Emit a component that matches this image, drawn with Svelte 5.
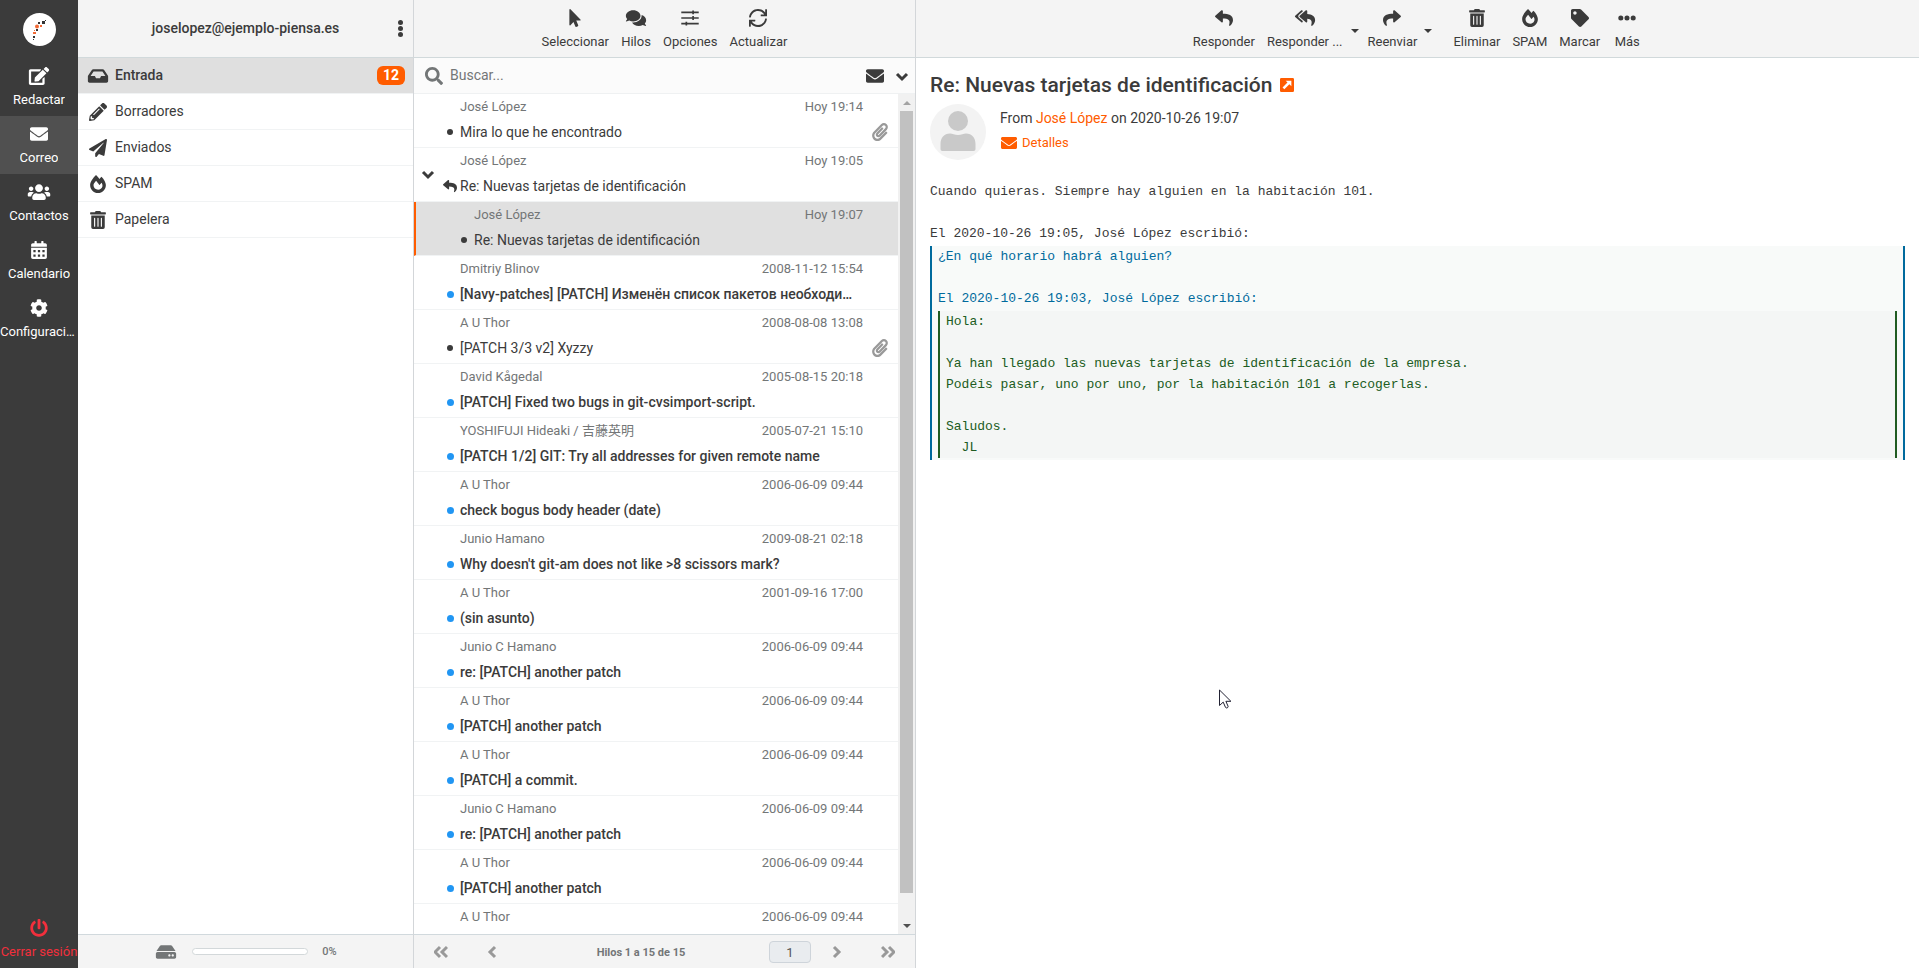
<script>
  // glyphs are drawn on a 512 high grid, w is the grid width
  const icons = {
    compose: { w: 576, d: 'M402.6 83.2l90.2 90.2c3.8 3.8 3.8 10 0 13.8L274.4 405.6l-92.8 10.3c-12.4 1.4-22.9-9.1-21.5-21.5l10.3-92.8L388.8 83.2c3.8-3.8 10-3.8 13.8 0zm162-22.9l-48.8-48.8c-15.2-15.2-39.9-15.2-55.2 0l-35.4 35.4c-3.8 3.8-3.8 10 0 13.8l90.2 90.2c3.8 3.8 10 3.8 13.8 0l35.4-35.4c15.2-15.3 15.2-40 0-55.2zM384 346.2V448H64V128h229.8c3.2 0 6.2-1.3 8.5-3.5l40-40c7.6-7.6 2.2-20.5-8.5-20.5H48C21.5 64 0 85.5 0 112v352c0 26.5 21.5 48 48 48h352c26.5 0 48-21.5 48-48V306.2c0-10.7-12.9-16-20.5-8.5l-40 40c-2.2 2.3-3.5 5.3-3.5 8.5z' },
    mail: { w: 512, d: 'M502.3 190.8c3.9-3.1 9.7-.2 9.7 4.7V400c0 26.5-21.5 48-48 48H48c-26.5 0-48-21.5-48-48V195.6c0-5 5.7-7.8 9.7-4.7 22.4 17.4 52.1 39.5 154.1 113.6 21.1 15.4 56.7 47.8 92.2 47.6 35.7.3 72-32.8 92.3-47.6 102-74.1 131.6-96.3 154-113.7zM256 320c23.2.4 56.6-29.2 73.4-41.4 132.7-96.3 142.8-104.7 173.4-128.7 5.8-4.5 9.2-11.5 9.2-18.9v-19c0-26.5-21.5-48-48-48H48c-26.5 0-48 21.5-48 48v19c0 7.4 3.4 14.3 9.2 18.9 30.6 23.9 40.7 32.4 173.4 128.7 16.8 12.2 50.2 41.8 73.4 41.4z' },
    users: { w: 640, d: 'M96 224c35.3 0 64-28.7 64-64s-28.7-64-64-64-64 28.7-64 64 28.7 64 64 64zm448 0c35.3 0 64-28.7 64-64s-28.7-64-64-64-64 28.7-64 64 28.7 64 64 64zm32 32h-64c-17.6 0-33.5 7.1-45.1 18.6 40.3 22.1 68.9 62 75.1 109.4h66c17.7 0 32-14.3 32-32v-32c0-35.3-28.7-64-64-64zm-256 0c61.9 0 112-50.1 112-112S381.9 32 320 32 208 82.1 208 144s50.1 112 112 112zm76.8 32h-8.3c-20.8 10-43.9 16-68.5 16s-47.6-6-68.5-16h-8.3C179.6 288 128 339.6 128 403.2V432c0 26.5 21.5 48 48 48h288c26.5 0 48-21.5 48-48v-28.8c0-63.6-51.6-115.2-115.2-115.2zm-223.7-13.4C161.5 263.1 145.6 256 128 256H64c-35.3 0-64 28.7-64 64v32c0 17.7 14.3 32 32 32h65.9c6.3-47.4 34.9-87.3 75.2-109.4z' },
    calendar: { w: 448, d: 'M400 64h-48V16c0-8.8-7.2-16-16-16h-32c-8.8 0-16 7.2-16 16v48H160V16c0-8.8-7.2-16-16-16h-32c-8.8 0-16 7.2-16 16v48H48C21.5 64 0 85.5 0 112v48h448v-48c0-26.5-21.5-48-48-48zM0 192v272c0 26.500 21.500 48 48 48h352c26.500 0 48-21.500 48-48V192zM64 256h64v64H64zm128 0h64v64h-64zm128 0h64v64h-64zM64 384h64v64H64zm128 0h64v64h-64zm128 0h64v64h-64z' },
    cog: { w: 512, d: 'M487.4 315.7l-42.6-24.6c4.3-23.2 4.3-47 0-70.2l42.6-24.6c4.9-2.8 7.1-8.6 5.5-14-11.1-35.6-30-67.8-54.7-94.6-3.8-4.1-10-5.1-14.8-2.3L380.8 110c-17.9-15.4-38.5-27.3-60.8-35.1V25.8c0-5.6-3.9-10.5-9.4-11.7-36.7-8.2-74.3-7.8-109.2 0-5.5 1.2-9.4 6.1-9.4 11.7V75c-22.2 7.9-42.8 19.8-60.8 35.1L88.7 85.5c-4.9-2.8-11-1.9-14.8 2.3-24.7 26.7-43.6 58.9-54.7 94.6-1.7 5.4.6 11.2 5.5 14L67.3 221c-4.3 23.2-4.3 47 0 70.2l-42.6 24.6c-4.9 2.8-7.1 8.6-5.5 14 11.1 35.6 30 67.8 54.7 94.6 3.8 4.1 10 5.1 14.8 2.3l42.6-24.6c17.9 15.4 38.5 27.3 60.8 35.1v49.2c0 5.6 3.9 10.5 9.4 11.7 36.7 8.2 74.3 7.8 109.2 0 5.5-1.2 9.4-6.1 9.4-11.700v-49.2c22.2-7.9 42.8-19.8 60.8-35.1l42.6 24.6c4.9 2.8 11 1.9 14.8-2.3 24.7-26.7 43.6-58.9 54.7-94.6 1.5-5.5-.7-11.3-5.6-14.1zM256 336c-44.1 0-80-35.9-80-80s35.9-80 80-80 80 35.9 80 80-35.9 80-80 80z' },
    power: { w: 512, d: 'M400 54.1c63 45 104 118.6 104 201.9 0 136.8-110.8 247.7-247.5 248C120 504.3 8.2 393 8 256.4 7.900 173.1 48.9 99.3 111.8 54.2c11.7-8.3 28-4.8 35 7.7L162.6 90c5.9 10.5 3.1 23.8-6.6 31-41.5 30.8-68 79.6-68 134.9-.1 92.3 74.5 168.1 168 168.1 91.6 0 168.6-74.2 168-169.1-.3-51.8-24.7-101.8-68.1-134-9.7-7.2-12.4-20.5-6.5-30.9l15.8-28.1c7-12.4 23.2-16.1 34.8-7.8zM296 264V24c0-13.3-10.7-24-24-24h-32c-13.3 0-24 10.7-24 24v240c0 13.3 10.7 24 24 24h32c13.3 0 24-10.7 24-24z' },
    inbox: { w: 576, d: 'M567.9 243.900L462.3 85.400A48 48 0 0 0 422.300 64H153.700a48 48 0 0 0-40 21.400L8.100 243.900A48 48 0 0 0 0 270.500V400c0 26.500 21.500 48 48 48h480c26.500 0 48-21.500 48-48V270.500a48 48 0 0 0-8.100-26.600zM162.300 128h251.500l85.300 128H376l-32 64H232l-32-64H76.900l85.400-128z' },
    pencil: { w: 512, d: 'M497.9 142.1l-46.1 46.1c-4.7 4.7-12.3 4.7-17 0l-111-111c-4.7-4.7-4.7-12.3 0-17l46.1-46.1c18.7-18.7 49.1-18.7 67.9 0l60.1 60.1c18.8 18.7 18.8 49.1 0 67.9zM284.2 99.8L21.6 362.4.4 483.900c-2.9 16.4 11.400 30.6 27.8 27.8l121.500-21.3 262.600-262.600c4.700-4.700 4.700-12.300 0-17l-111-111c-4.800-4.700-12.400-4.700-17.100 0zM124.100 339.900c-5.500-5.500-5.500-14.300 0-19.800l154-154c5.500-5.500 14.300-5.500 19.800 0s5.500 14.300 0 19.800l-154 154c-5.500 5.500-14.300 5.500-19.800 0zM88 424h48v36.300l-64.500 11.300-31.100-31.100L51.700 376H88v48z' },
    plane: { w: 512, d: 'M476 3.2L12.5 270.6c-18.1 10.4-15.8 35.6 2.2 43.2L121 358.4l287.3-253.2c5.5-4.9 13.3 2.6 8.6 8.3L176 407v80.5c0 23.6 28.5 32.9 42.5 15.8L282 426l124.6 52.2c14.2 6 30.4-2.9 33-18.2l72-432C515 7.8 493.3-6.8 476 3.2z' },
    fire: { w: 448, d: 'M323.56 51.2c-20.8 19.3-39.58 39.59-56.22 59.97C240.08 73.62 206.28 35.53 168 0 69.74 91.17 0 209.96 0 281.6 0 408.85 100.29 512 224 512s224-103.15 224-230.4c0-53.27-51.98-163.14-124.44-230.4zm-19.47 340.65C282.43 407.01 255.72 416 226.86 416 154.71 416 96 368.26 96 290.75c0-38.61 24.31-72.63 72.79-130.75 6.93 7.98 98.83 125.34 98.83 125.34l58.63-66.88c4.14 6.85 7.91 13.55 11.27 19.97 27.35 52.19 15.81 118.97-33.43 153.42z' },
    trash: { w: 448, d: 'M32 464a48 48 0 0 0 48 48h288a48 48 0 0 0 48-48V128H32zm272-256a16 16 0 0 1 32 0v224a16 16 0 0 1-32 0zm-96 0a16 16 0 0 1 32 0v224a16 16 0 0 1-32 0zm-96 0a16 16 0 0 1 32 0v224a16 16 0 0 1-32 0zM432 32H312l-9.4-18.7A24 24 0 0 0 281.1 0H166.8a23.72 23.72 0 0 0-21.4 13.3L136 32H16A16 16 0 0 0 0 48v32a16 16 0 0 0 16 16h416a16 16 0 0 0 16-16V48a16 16 0 0 0-16-16z' },
    pointer: { w: 320, d: 'M302.189 329.126H196.105l55.831 135.993c3.889 9.428-.555 19.999-9.444 23.999l-49.165 21.427c-9.165 4-19.443-.571-23.332-9.714l-53.053-129.136-86.664 89.138C18.729 472.71 0 463.554 0 447.977V18.299C0 1.899 19.921-6.096 30.277 5.443l284.412 292.542c11.472 11.179 3.007 31.141-12.5 31.141z' },
    comments: { w: 576, d: 'M416 192c0-88.4-93.1-160-208-160S0 103.6 0 192c0 34.3 14.1 65.9 38 92-13.4 30.2-35.5 54.2-35.8 54.5-2.2 2.3-2.8 5.7-1.5 8.7S4.8 352 8 352c36.6 0 66.9-12.3 88.7-25 32.2 15.7 70.3 25 111.3 25 114.9 0 208-71.6 208-160zm122 220c23.9-26 38-57.7 38-92 0-66.9-53.5-124.2-129.3-148.1.9 6.6 1.3 13.3 1.3 20.1 0 105.9-107.7 192-240 192-10.8 0-21.3-.8-31.7-1.9C207.8 439.6 281.8 480 368 480c41 0 79.1-9.2 111.3-25 21.8 12.7 52.1 25 88.7 25 3.2 0 6.1-1.9 7.3-4.8 1.3-2.9.7-6.3-1.5-8.7-.3-.3-22.4-24.2-35.8-54.5z' },
    sliders: { w: 512, d: 'M8 72h312V40h48v32h136v48H368v32h-48v-32H8zM8 232h312v-32h48v32h136v48H368v32h-48v-32H8zM8 392h120v-32h48v32h328v48H176v32h-48v-32H8z' },
    refresh: { w: 512, d: 'M500 8h-27.700c-6.600 0-12 5.400-12 12v78C416 39 341 0 256 0 125 0 18 98 2 226c-1 7 5 14 12 14h29c6 0 11-4 12-10C70 130 154 56 256 56c74 0 140 39 176 100h-87c-7 0-12 5-12 12v28c0 7 5 12 12 12h155c7 0 12-5 12-12V20c0-7-5-12-12-12zM12 504h27.700c6.600 0 12-5.400 12-12v-78C96 473 171 512 256 512c131 0 238-98 254-226 1-7-5-14-12-14h-29c-6 0-11 4-12 10-15 100-99 174-201 174-74 0-140-39-176-100h87c7 0 12-5 12-12v-28c0-7-5-12-12-12H12c-7 0-12 5-12 12v176c0 7 5 12 12 12z' },
    search: { w: 512, d: 'M505 442.7L405.3 343c-4.5-4.5-10.6-7-17-7H372c27.6-35.3 44-79.7 44-128C416 93.1 322.9 0 208 0S0 93.1 0 208s93.1 208 208 208c48.3 0 92.7-16.4 128-44v16.3c0 6.4 2.5 12.5 7 17l99.7 99.7c9.4 9.4 24.6 9.4 33.9 0l28.3-28.3c9.4-9.4 9.4-24.6.1-34zM208 336c-70.7 0-128-57.2-128-128 0-70.7 57.2-128 128-128 70.7 0 128 57.2 128 128 0 70.7-57.2 128-128 128z' },
    clip: { w: 448, d: 'M43.246 466.142c-58.43-60.289-57.341-157.511 1.386-217.581L254.392 34c44.316-45.332 116.351-45.336 160.671 0 43.89 44.894 43.943 117.329 0 162.276L232.214 383.128c-29.855 30.537-78.633 30.111-107.982-.998-28.275-29.97-27.368-77.473 1.452-106.953l143.743-146.835c6.182-6.314 16.312-6.422 22.626-.241l22.861 22.379c6.315 6.182 6.422 16.312.241 22.626L171.427 319.927c-4.932 5.045-5.236 13.428-.648 18.292 4.372 4.634 11.245 4.711 15.688.165l182.849-186.851c19.613-20.062 19.613-52.725-.011-72.798-19.189-19.627-49.957-19.637-69.154 0L90.39 293.295c-34.763 35.56-35.299 93.12-1.191 128.313 34.01 35.093 88.985 35.137 123.058.286l172.06-175.999c6.177-6.319 16.307-6.433 22.626-.256l22.877 22.364c6.319 6.177 6.434 16.307.256 22.626l-172.06 175.998c-59.576 60.938-155.943 60.216-214.77-.485z' },
    reply: { w: 512, d: 'M8.309 189.836L184.313 37.851C199.719 24.546 224 35.347 224 56.015v80.053c160.629 1.839 288 34.032 288 186.258 0 61.441-39.581 122.309-83.333 154.132-13.653 9.931-33.111-2.533-28.077-18.631 45.344-145.012-21.507-183.51-176.59-185.742V360c0 20.7-24.3 31.453-39.687 18.164l-176.004-152c-11.071-9.562-11.086-26.753 0-36.328z' },
    replyAll: { w: 576, d: 'M136.309 189.836L312.313 37.851C327.72 24.546 352 35.348 352 56.015v82.763c129.182 10.231 224 52.212 224 183.548 0 61.441-39.582 122.309-83.333 154.132-13.653 9.931-33.111-2.533-28.077-18.631 38.512-123.162-3.922-169.482-112.59-182.015v84.175c0 20.701-24.3 31.453-39.687 18.164L136.309 226.164c-11.071-9.561-11.086-26.753 0-36.328zm-128 36.328L184.313 378.15C199.7 391.439 224 380.687 224 359.986v-15.818l-108.606-93.785A55.96 55.96 0 0 1 96 207.998a55.953 55.953 0 0 1 19.393-42.38L224 71.832V56.015c0-20.667-24.28-31.469-39.687-18.164L8.309 189.836c-11.086 9.575-11.071 26.767 0 36.328z' },
    tag: { w: 512, d: 'M0 252.118V48C0 21.49 21.49 0 48 0h204.118a48 48 0 0 1 33.941 14.059l211.882 211.882c18.745 18.745 18.745 49.137 0 67.882L293.823 497.941c-18.745 18.745-49.137 18.745-67.882 0L14.059 286.059A48 48 0 0 1 0 252.118zM112 64c-26.51 0-48 21.49-48 48s21.49 48 48 48 48-21.49 48-48-21.49-48-48-48z' },
    dots: { w: 512, d: 'M328 256a72 72 0 1 1-144 0 72 72 0 0 1 144 0zM432 184a72 72 0 1 0 0 144 72 72 0 0 0 0-144zM80 184a72 72 0 1 0 0 144 72 72 0 0 0 0-144z' },
    disk: { w: 576, d: 'M576 304v96c0 26.51-21.49 48-48 48H48c-26.51 0-48-21.49-48-48v-96c0-26.51 21.49-48 48-48h480c26.51 0 48 21.49 48 48zm-48-80a79.557 79.557 0 0 1 30.777 6.165L462.25 85.374A48.003 48.003 0 0 0 422.311 64H153.689a48 48 0 0 0-39.938 21.374L17.223 230.165A79.557 79.557 0 0 1 48 224h480zm-48 96c-17.673 0-32 14.327-32 32s14.327 32 32 32 32-14.327 32-32-14.327-32-32-32zm-96 0c-17.673 0-32 14.327-32 32s14.327 32 32 32 32-14.327 32-32-14.327-32-32-32z' },
    external: { w: 512, d: 'M48 0h416a48 48 0 0 1 48 48v416a48 48 0 0 1-48 48H48a48 48 0 0 1-48-48V48A48 48 0 0 1 48 0zM208 96l66 66L92 344l68 68 182-182 74 74V96z' }
  };

  const tasks = [
    { icon: 'compose', label: 'Redactar' },
    { icon: 'mail', label: 'Correo', active: true },
    { icon: 'users', label: 'Contactos' },
    { icon: 'calendar', label: 'Calendario' },
    { icon: 'cog', label: 'Configuración' }
  ];

  const folders = [
    { icon: 'inbox', label: 'Entrada', count: 12, active: true },
    { icon: 'pencil', label: 'Borradores' },
    { icon: 'plane', label: 'Enviados' },
    { icon: 'fire', label: 'SPAM' },
    { icon: 'trash', label: 'Papelera' }
  ];

  const listTools = [
    { icon: 'pointer', label: 'Seleccionar' },
    { icon: 'comments', label: 'Hilos' },
    { icon: 'sliders', label: 'Opciones' },
    { icon: 'refresh', label: 'Actualizar' }
  ];

  const mailTools = [
    { icon: 'reply', label: 'Responder' },
    { icon: 'replyAll', label: 'Responder ...', menu: true },
    { icon: 'reply', label: 'Reenviar', flip: true, menu: true, last: true },
    { icon: 'trash', label: 'Eliminar' },
    { icon: 'fire', label: 'SPAM' },
    { icon: 'tag', label: 'Marcar' },
    { icon: 'dots', label: 'Más' }
  ];

  const messages = [
    { from: 'José López', date: 'Hoy 19:14', subject: 'Mira lo que he encontrado', clip: true },
    { from: 'José López', date: 'Hoy 19:05', subject: 'Re: Nuevas tarjetas de identificación', replied: true, open: true },
    { from: 'José López', date: 'Hoy 19:07', subject: 'Re: Nuevas tarjetas de identificación', child: true },
    { from: 'Dmitriy Blinov', date: '2008-11-12 15:54', subject: '[Navy-patches] [PATCH] Изменён список пакетов необходимых для сборки', unread: true },
    { from: 'A U Thor', date: '2008-08-08 13:08', subject: '[PATCH 3/3 v2] Xyzzy', clip: true },
    { from: 'David Kågedal', date: '2005-08-15 20:18', subject: '[PATCH] Fixed two bugs in git-cvsimport-script.', unread: true },
    { from: 'YOSHIFUJI Hideaki / 吉藤英明', date: '2005-07-21 15:10', subject: '[PATCH 1/2] GIT: Try all addresses for given remote name', unread: true },
    { from: 'A U Thor', date: '2006-06-09 09:44', subject: 'check bogus body header (date)', unread: true },
    { from: 'Junio Hamano', date: '2009-08-21 02:18', subject: "Why doesn't git-am does not like >8 scissors mark?", unread: true },
    { from: 'A U Thor', date: '2001-09-16 17:00', subject: '(sin asunto)', unread: true },
    { from: 'Junio C Hamano', date: '2006-06-09 09:44', subject: 're: [PATCH] another patch', unread: true },
    { from: 'A U Thor', date: '2006-06-09 09:44', subject: '[PATCH] another patch', unread: true },
    { from: 'A U Thor', date: '2006-06-09 09:44', subject: '[PATCH] a commit.', unread: true },
    { from: 'Junio C Hamano', date: '2006-06-09 09:44', subject: 're: [PATCH] another patch', unread: true },
    { from: 'A U Thor', date: '2006-06-09 09:44', subject: '[PATCH] another patch', unread: true },
    { from: 'A U Thor', date: '2006-06-09 09:44', subject: '[PATCH] a commit.', unread: true }
  ];

  const reply = 'Cuando quieras. Siempre hay alguien en la habitación 101.\n\nEl 2020-10-26 19:05, José López escribió:';
  const quote = '¿En qué horario habrá alguien?\n\nEl 2020-10-26 19:03, José López escribió:';
  const original = 'Hola:\n\nYa han llegado las nuevas tarjetas de identificación de la empresa.\nPodéis pasar, uno por uno, por la habitación 101 a recogerlas.\n\nSaludos.\n  JL';

  let search = $state('');
  let page = $state('1');
</script>

{#snippet icon(name, flip = false)}
  <svg class="icon" class:flip viewBox="0 0 {icons[name].w} 512" aria-hidden="true">
    <path fill-rule="evenodd" d={icons[name].d} />
  </svg>
{/snippet}

{#snippet chevron(d)}
  <svg class="chevron" viewBox="0 0 14 14" aria-hidden="true"><path {d} /></svg>
{/snippet}

<div class="layout">
  <nav class="taskmenu">
    <a class="logo" href="#inicio" aria-label="Inicio">
      <svg viewBox="0 0 33 33" width="33" height="33" aria-hidden="true">
        <circle cx="16.500" cy="16.500" r="16.500" fill="#fff" />
        <g fill="#333">
          <path d="M19 8h3v3h-3zM15 9h2v2h-2zM13 16h2v2h-2zM10 23h2v2h-2zM10 26h1v1h-1z" />
          <path d="M22 7h1v1h-1z" />
        </g>
        <g fill="#f26a35">
          <circle cx="14" cy="13.500" r="2" />
          <path d="M17 12h2v2h-2zM10 19h3v2h-3zM11 17h1v1h-1z" />
        </g>
      </svg>
    </a>
    {#each tasks as task}
      <a class="task" class:active={task.active} href="#tarea">
        {@render icon(task.icon)}
        <span>{task.label}</span>
      </a>
    {/each}
    <a class="task logout" href="#salir">
      {@render icon('power')}
      <span>Cerrar sesión</span>
    </a>
  </nav>

  <aside class="folders">
    <header class="bar account">
      <span class="email">joselopez@ejemplo-piensa.es</span>
      <button class="kebab" aria-label="Acciones de carpeta"><i></i><i></i><i></i></button>
    </header>
    <ul class="folder-list">
      {#each folders as folder}
        <li class:active={folder.active}>
          <a href="#carpeta">
            {@render icon(folder.icon)}
            <span class="name">{folder.label}</span>
            {#if folder.count}<span class="badge">{folder.count}</span>{/if}
          </a>
        </li>
      {/each}
    </ul>
    <footer class="foot quota">
      {@render icon('disk')}
      <div class="meter"></div>
      <span>0%</span>
    </footer>
  </aside>

  <section class="list">
    <header class="bar tools">
      {#each listTools as tool}
        <button class="tool">{@render icon(tool.icon)}<span>{tool.label}</span></button>
      {/each}
    </header>
    <div class="search">
      {@render icon('search')}
      <input type="text" aria-label="Buscar" placeholder="Buscar..." bind:value={search} />
      <button aria-label="No leídos">{@render icon('mail')}</button>
      <button aria-label="Opciones de búsqueda">{@render chevron('M2 5l5 5 5-5')}</button>
    </div>
    <div class="scroller">
      <ul class="messages">
        {#each messages as msg}
          <li class:unread={msg.unread} class:child={msg.child}>
            <div class="thread">{#if msg.open}{@render chevron('M2 5l5 5 5-5')}{/if}</div>
            <div class="status">
              {#if msg.replied}{@render icon('reply')}{:else}<i class="dot"></i>{/if}
            </div>
            <div class="summary">
              <div class="meta"><span>{msg.from}</span><time>{msg.date}</time></div>
              <a class="subject" href="#mensaje">{msg.subject}</a>
            </div>
            <div class="flags">{#if msg.clip}{@render icon('clip')}{/if}</div>
          </li>
        {/each}
      </ul>
      <div class="scrollbar">
        <i class="up"></i>
        <div class="track"><div class="thumb"></div></div>
        <i class="down"></i>
      </div>
    </div>
    <footer class="foot pager">
      <button aria-label="Primera página">{@render chevron('M6 2L1 7l5 5M13 2L8 7l5 5')}</button>
      <button aria-label="Página anterior">{@render chevron('M10 2L5 7l5 5')}</button>
      <span class="count">Hilos 1 a 15 de 15</span>
      <input type="text" aria-label="Página" bind:value={page} />
      <button aria-label="Página siguiente">{@render chevron('M4 2l5 5-5 5')}</button>
      <button aria-label="Última página">{@render chevron('M1 2l5 5-5 5M8 2l5 5-5 5')}</button>
    </footer>
  </section>

  <main class="content">
    <header class="bar tools">
      {#each mailTools as tool}
        <button class="tool">{@render icon(tool.icon, tool.flip)}<span>{tool.label}</span></button>
        {#if tool.menu}
          <button class="caret" class:last={tool.last} aria-label="Más opciones"><i></i></button>
        {/if}
      {/each}
    </header>
    <article class="mail">
      <h1>Re: Nuevas tarjetas de identificación <a href="#ventana" aria-label="Abrir en ventana nueva">{@render icon('external')}</a></h1>
      <div class="sender">
        <svg class="photo" viewBox="0 0 56 56" aria-hidden="true">
          <circle cx="28" cy="28" r="28" fill="#f3f3f3" />
          <circle cx="28" cy="17" r="10" fill="#c9c9c9" />
          <path d="M10.500 45v-5c0-6 3.500-10.500 9.500-10.500 2.500 0 4.500 1.500 8 1.500s5.500-1.500 8-1.500c6 0 9.500 4.500 9.500 10.500v5c0 1.300-.7 2-2 2h-31c-1.300 0-2-.7-2-2z" fill="#c9c9c9" />
        </svg>
        <div>
          <p>From <a href="#jose">José López</a> on 2020-10-26 19:07</p>
          <a class="details" href="#detalles">{@render icon('mail')}Detalles</a>
        </div>
      </div>
      <div class="body">
        <div class="text">{reply}</div>
        <blockquote>
          <div class="text">{quote}</div>
          <blockquote class="text">{original}</blockquote>
        </blockquote>
      </div>
    </article>
  </main>

  <svg class="cursor" viewBox="0 0 13 20" aria-hidden="true">
    <path d="M.5 1v15.500l3.700-3.400 2.300 5.300c.7 1.200 3 .3 2.600-1.100l-2.200-5h5z" fill="#fff" stroke="#223" stroke-width="1" />
  </svg>
</div>

<style>
  :global(body) {
    background: #fff;
  }

  .layout {
    display: flex;
    height: 100vh;
    overflow: hidden;
    color: #3b3b3b;
    font: 14px/21px Roboto, "Noto Sans CJK JP", sans-serif;
  }

  .layout * {
    box-sizing: border-box;
  }

  a {
    color: inherit;
    text-decoration: none;
  }

  ul {
    margin: 0;
    padding: 0;
    list-style: none;
  }

  button,
  input {
    margin: 0;
    padding: 0;
    border: 0;
    background: none;
    color: inherit;
    font: inherit;
  }

  .icon {
    display: block;
    flex: none;
    width: 24px;
    height: 18px;
    fill: currentColor;
  }

  .icon.flip {
    transform: scaleX(-1);
  }

  .chevron {
    display: block;
    width: 14px;
    height: 14px;
    fill: none;
    stroke: currentColor;
    stroke-width: 3;
  }

  .taskmenu {
    display: flex;
    flex: none;
    flex-direction: column;
    width: 78px;
    background: #3b3b3b;
    color: #fff;
  }

  .logo {
    display: flex;
    align-items: center;
    justify-content: center;
    height: 58px;
  }

  .task {
    display: flex;
    flex-direction: column;
    align-items: center;
    gap: 4px;
    height: 58px;
    padding-top: 9px;
    font-size: 13px;
    line-height: 22px;
  }

  .task span {
    max-width: 100%;
    overflow: hidden;
    text-overflow: ellipsis;
    white-space: nowrap;
  }

  .task.active {
    background: #505050;
  }

  .task.logout {
    margin-top: auto;
    color: #f22f3c;
  }

  .task.logout span {
    max-width: none;
    overflow: visible;
  }

  .bar {
    display: flex;
    flex: none;
    align-items: center;
    height: 58px;
    border-bottom: 1px solid #d1d9db;
    background: #f4f4f4;
  }

  .folders {
    display: flex;
    flex: none;
    flex-direction: column;
    width: 336px;
    border-right: 1px solid #d3d6d9;
  }

  .account {
    padding: 0 8px 0 18px;
  }

  .email {
    flex: 1;
    font-weight: 500;
    text-align: center;
  }

  .kebab {
    display: flex;
    flex-direction: column;
    align-items: center;
    gap: 1px;
    width: 10px;
  }

  .kebab i {
    width: 5px;
    height: 5px;
    border-radius: 50%;
    background: currentColor;
  }

  .folder-list {
    flex: 1;
  }

  .folder-list li {
    border-bottom: 1px solid #f1f3f4;
  }

  .folder-list li.active {
    background: #dfdfdf;
    font-weight: 500;
  }

  .folder-list a {
    display: flex;
    align-items: center;
    gap: 5px;
    height: 35px;
    padding: 0 8px;
  }

  .name {
    flex: 1;
  }

  .badge {
    padding: 0 6px;
    border-radius: 6px;
    background: #ff5c00;
    color: #fff;
    font-weight: 700;
    line-height: 19px;
  }

  .foot {
    display: flex;
    flex: none;
    align-items: center;
    height: 34px;
    border-top: 1px solid #d1d9dd;
    background: #f4f4f4;
    color: #737677;
    font-size: 11px;
  }

  .quota {
    justify-content: center;
    gap: 14px;
    font-weight: 500;
  }

  .meter {
    width: 116px;
    height: 7px;
    border: 1px solid #d3d8da;
    border-radius: 4px;
    background: #fff;
  }

  .list {
    display: flex;
    flex: none;
    flex-direction: column;
    width: 502px;
    border-right: 1px solid #d3d6d9;
  }

  .tools {
    justify-content: center;
    padding-top: 4px;
  }

  .tool {
    display: flex;
    flex-direction: column;
    align-items: center;
    gap: 4px;
    min-width: 42px;
    padding: 0 6px;
    font-size: 13px;
    line-height: 22px;
    white-space: nowrap;
  }

  .caret {
    display: flex;
    justify-content: center;
    width: 13px;
  }

  .caret.last {
    width: 24px;
    padding-right: 14px;
  }

  .caret i {
    border: 4px solid transparent;
    border-top-color: currentColor;
    border-bottom: 0;
  }

  .search {
    display: flex;
    flex: none;
    align-items: center;
    height: 36px;
    padding: 0 6px 0 8px;
    border-bottom: 1px solid #eff1f2;
    background: #fbfbfb;
  }

  .search > .icon {
    color: #737677;
  }

  .search input {
    flex: 1;
    min-width: 0;
    padding-left: 4px;
    outline: 0;
  }

  .search input::placeholder {
    color: #737677;
    opacity: 1;
  }

  .search button {
    padding-left: 8px;
  }

  .scroller {
    display: flex;
    flex: 1;
    min-height: 0;
  }

  .messages {
    flex: 1;
    min-width: 0;
    overflow: hidden;
  }

  .messages li {
    display: flex;
    align-items: flex-end;
    height: 54px;
    padding: 0 9px 2px 2px;
    border-bottom: 1px solid #f1f3f4;
    line-height: 26px;
  }

  .messages li.child {
    padding-left: 14px;
    border-left: 2px solid #ff5c00;
    background: #e0e0e0;
  }

  .thread {
    align-self: center;
    width: 24px;
    padding-left: 5px;
  }

  .status {
    display: flex;
    align-items: center;
    justify-content: center;
    width: 20px;
    height: 26px;
  }

  .status .icon {
    width: 14px;
    height: 14px;
  }

  .dot {
    width: 6px;
    height: 6px;
    border-radius: 50%;
    background: #3b3b3b;
  }

  .unread .dot {
    width: 7px;
    height: 7px;
    background: #2196f3;
  }

  .summary {
    flex: 1;
    min-width: 0;
  }

  .meta {
    display: flex;
    justify-content: space-between;
    color: #737677;
    font-size: 13px;
    line-height: 25px;
  }

  .subject {
    display: block;
    height: 26px;
    margin-right: 4px;
    overflow: hidden;
    text-overflow: ellipsis;
    white-space: nowrap;
  }

  .unread .subject {
    font-weight: 500;
  }

  .flags {
    width: 26px;
    height: 26px;
    padding: 4px 0 0 5px;
    color: #999;
  }

  .scrollbar {
    display: flex;
    flex: none;
    flex-direction: column;
    align-items: center;
    width: 17px;
    background: #f1f1f1;
  }

  .track {
    flex: 1;
    width: 13px;
  }

  .thumb {
    height: 97%;
    background: #c1c1c1;
  }

  .up,
  .down {
    margin: 7px 0 6px;
    border: 4px solid transparent;
  }

  .up {
    border-top: 0;
    border-bottom-color: #a3a3a3;
  }

  .down {
    border-top-color: #505050;
    border-bottom: 0;
  }

  .pager {
    padding: 1px 2px 0 1px;
  }

  .pager button {
    display: flex;
    justify-content: center;
    width: 51px;
    color: #999;
  }

  .count {
    flex: 1;
    padding-right: 4px;
    font-weight: 700;
    text-align: center;
  }

  .pager input {
    width: 42px;
    height: 22px;
    border: 1px solid #ced4da;
    border-radius: 4px;
    background: #e9ecef;
    color: #555;
    font-size: 13px;
    text-align: center;
  }

  .content {
    flex: 1;
    min-width: 0;
  }

  .mail {
    padding: 14px;
  }

  h1 {
    display: flex;
    align-items: center;
    gap: 8px;
    margin: 0 0 6px;
    font-size: 21px;
    font-weight: 500;
    line-height: 26px;
  }

  h1 .icon {
    width: 14px;
    height: 14px;
    color: #ff5c00;
  }

  .sender {
    display: flex;
    gap: 14px;
    margin-bottom: 21px;
  }

  .sender a {
    color: #ff5c00;
  }

  .sender p {
    margin: 4px 0 3px;
  }

  .photo {
    width: 56px;
    height: 56px;
  }

  .details {
    display: flex;
    align-items: center;
    gap: 4px;
    font-size: 13px;
  }

  .details .icon {
    width: 18px;
    height: 16px;
  }

  .body {
    font: 13px/21px "Liberation Mono", monospace;
  }

  .text {
    white-space: pre-wrap;
  }

  .body blockquote {
    margin: 2px 0 0;
    padding: 0 6px;
    border: solid #006a9d;
    border-width: 0 2px;
    background: #f8faf9;
    color: #006a9d;
  }

  .body > blockquote {
    padding-bottom: 2px;
  }

  .body blockquote blockquote {
    border-color: #205c22;
    background: #f4f6f5;
    color: #205c22;
  }

  .cursor {
    position: absolute;
    left: 1219px;
    top: 689px;
    width: 13px;
    height: 20px;
  }
</style>
